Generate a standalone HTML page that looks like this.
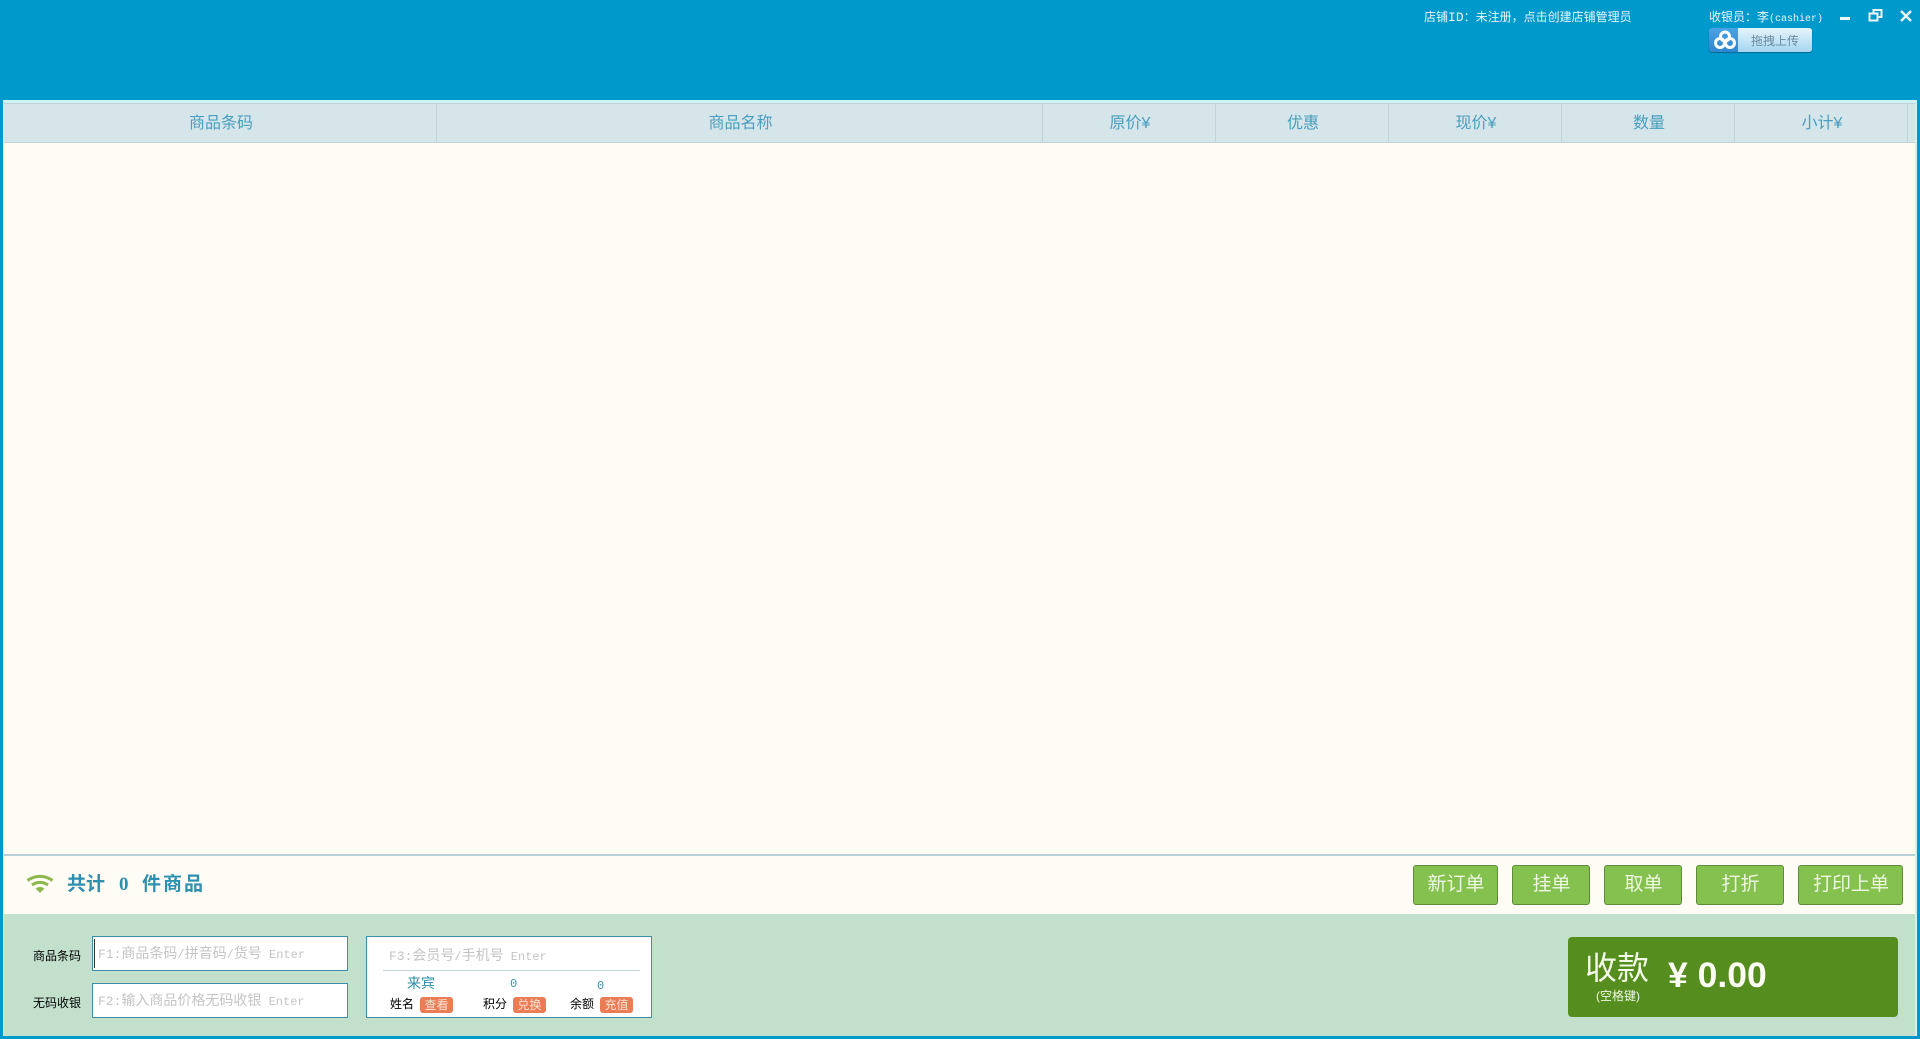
<!DOCTYPE html>
<html lang="zh-CN"><head><meta charset="utf-8"><title>收银</title>
<style>
html,body{margin:0;padding:0;width:1920px;height:1039px;overflow:hidden;background:#0099cc}
body{position:relative;font-family:"Liberation Sans","Noto Sans CJK SC",sans-serif}
div,span.t{position:absolute;box-sizing:border-box}
.t{white-space:nowrap;line-height:20px;height:20px}
.th{position:absolute;top:103px;height:40px;line-height:41px;text-align:center;font-size:16px;color:#4a9ebf;border-right:1px solid #bfd3d8;padding-left:2px}
.btn{top:865px;height:40px;background:#84c14f;border:1px solid #5f8c3c;border-radius:3px;color:#eef7e2;font-size:19px;line-height:37px;text-align:center;padding-left:1px}
.inp{background:#fff;border:1px solid #3f8ea8}
.ph{color:#c4c4c4;font-size:14px}
.m{font-family:"Liberation Mono",monospace;font-size:12px}
.f{font-family:"Liberation Mono",monospace;font-size:13px}
.badge{background:#ea7d55;color:#fbe3d6;border-radius:3px;height:16px;top:997px;width:33px;font-size:12px;line-height:16px;text-align:center}
.lb{font-size:12px;color:#000}
.w{color:#e6f6fb;font-size:12px}
</style></head><body>
<span class="t w" style="left:1424px;top:7px">店铺<span class="m" style="font-size:13px">ID</span>：未注册，点击创建店铺管理员</span>
<span class="t w" style="left:1709px;top:7px">收银员：李<span class="m" style="font-size:10px">(cashier)</span></span>

<div style="left:1709px;top:28px;width:103px;height:24px;border-radius:3px;overflow:hidden;box-shadow:0 1px 1px rgba(0,60,90,.5)">
 <div style="left:0;top:0;width:29px;height:24px;background:linear-gradient(#4aa3e4,#2f86cf)"></div>
 <div style="left:29px;top:0;width:74px;height:24px;background:linear-gradient(#e6f4fc,#a6d6ef);color:#6b8a9c;font-size:12px;line-height:26px;text-align:center">拖拽上传</div>
</div>
<svg style="position:absolute;left:1714px;top:30px" width="22" height="20" viewBox="0 0 22 20"><g fill="none" stroke="#fff" stroke-width="3"><circle cx="11" cy="6.500" r="4.500"/><circle cx="6" cy="13" r="4.500"/><circle cx="16" cy="13" r="4.500"/></g></svg>

<svg style="position:absolute;left:1836px;top:6px" width="80" height="20" viewBox="0 0 80 20">
 <rect x="4" y="11" width="10" height="3" fill="#e8f7fb"/>
 <path d="M37.500 6.500V4h8v7h-3M33.500 7.500h8v7h-8z" fill="none" stroke="#e8f7fb" stroke-width="2"/>
 <path d="M65 5l10 10M75 5L65 15" stroke="#e8f7fb" stroke-width="2.400" fill="none"/>
</svg>

<div style="left:3px;top:100px;width:1914px;height:936px;background:#cdf3f7"></div>
<div style="left:4px;top:103px;width:1911px;height:752px;background:#fffcf5"></div>
<div style="left:4px;top:103px;width:1911px;height:40px;background:#d5e5ea;border-top:1px solid #bfd3d8;border-bottom:1px solid #bfd3d8"></div>
<div class="th" style="left:4px;width:433px">商品条码</div>
<div class="th" style="left:437px;width:606px">商品名称</div>
<div class="th" style="left:1043px;width:173px">原价¥</div>
<div class="th" style="left:1216px;width:173px">优惠</div>
<div class="th" style="left:1389px;width:173px">现价¥</div>
<div class="th" style="left:1562px;width:173px">数量</div>
<div class="th" style="left:1735px;width:173px">小计¥</div>

<div style="left:4px;top:854px;width:1911px;height:61px;background:#fffcf5;border-top:2px solid #b9d0d6"></div>
<svg style="position:absolute;left:26px;top:874px" width="28" height="20" viewBox="0 0 28 20">
 <g fill="none" stroke="#8db84f" stroke-width="3"><path d="M1.500 6.500C9 1 19 1 26.500 6.500"/><path d="M6 11C11 7.500 17 7.500 22 11"/></g>
 <path d="M9.500 14.500C12 12.500 16 12.500 18.500 14.500L14 19z" fill="#8db84f"/>
</svg>
<span class="t" style="left:67px;top:875px;font-size:19px;font-weight:700;color:#2f8fb0">共计</span>
<span class="t" style="left:119px;top:875px;font-size:19px;font-weight:700;color:#2f8fb0;font-family:'Liberation Serif',serif">0</span>
<span class="t" style="left:142px;top:875px;font-size:19px;font-weight:700;color:#2f8fb0;letter-spacing:2px">件商品</span>

<div class="btn" style="left:1413px;width:85px">新订单</div>
<div class="btn" style="left:1512px;width:78px">挂单</div>
<div class="btn" style="left:1604px;width:78px">取单</div>
<div class="btn" style="left:1696px;width:88px">打折</div>
<div class="btn" style="left:1798px;width:105px">打印上单</div>

<div style="left:4px;top:914px;width:1911px;height:122px;background:#c2e0cc"></div>

<span class="t lb" style="left:33px;top:946px">商品条码</span>
<span class="t lb" style="left:33px;top:993px">无码收银</span>
<div class="inp" style="left:92px;top:936px;width:256px;height:35px"><div style="left:1px;top:2px;width:1px;height:29px;background:#333"></div></div>
<div class="inp" style="left:92px;top:983px;width:256px;height:35px"></div>
<span class="t ph" style="left:98px;top:943px"><span class="f">F1:</span>商品条码<span class="m">/</span>拼音码<span class="m">/</span>货号<span class="m"> Enter</span></span>
<span class="t ph" style="left:98px;top:990px"><span class="f">F2:</span>输入商品价格无码收银<span class="m"> Enter</span></span>

<div class="inp" style="left:366px;top:936px;width:286px;height:82px"></div>
<span class="t ph" style="left:389px;top:945px"><span class="f">F3:</span>会员号<span class="m">/</span>手机号<span class="m"> Enter</span></span>
<div style="left:383px;top:970px;width:257px;height:1px;background:#c3d6da"></div>
<span class="t" style="left:407px;top:973px;font-size:14px;color:#2f8fa8">来宾</span>
<span class="t m" style="left:510px;top:974px;color:#3a93ad">0</span>
<span class="t m" style="left:597px;top:976px;color:#3a93ad">0</span>
<span class="t lb" style="left:390px;top:994px">姓名</span><div class="badge" style="left:420px">查看</div>
<span class="t lb" style="left:483px;top:994px">积分</span><div class="badge" style="left:513px">兑换</div>
<span class="t lb" style="left:570px;top:994px">余额</span><div class="badge" style="left:600px">充值</div>

<div style="left:1568px;top:937px;width:330px;height:80px;background:#568d1f;border-radius:4px"></div>
<span class="t" style="left:1585px;top:958px;font-size:32px;color:#f3fae8">收款</span>
<span class="t" style="left:1596px;top:986px;font-size:12px;color:#eef7e2">(空格键)</span>
<span class="t" style="left:1668px;top:965px;font-size:35.500px;font-weight:700;color:#fbfdf2">¥ 0.00</span>
</body></html>
